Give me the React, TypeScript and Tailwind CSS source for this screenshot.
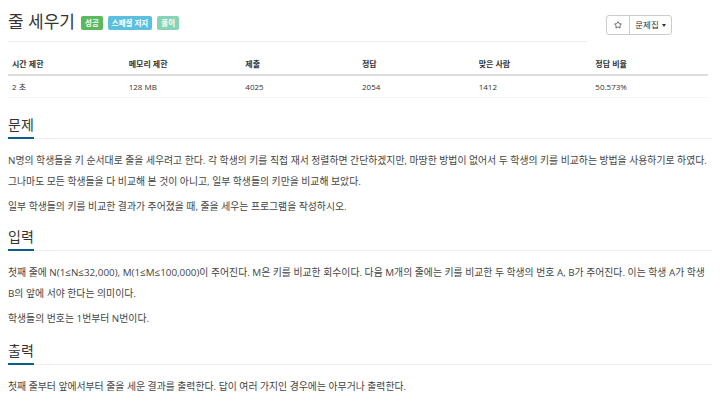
import { Star } from "lucide-react";

const limits = [
  { label: "시간 제한", value: "2 초" },
  { label: "메모리 제한", value: "128 MB" },
  { label: "제출", value: "4025" },
  { label: "정답", value: "2054" },
  { label: "맞은 사람", value: "1412" },
  { label: "정답 비율", value: "50.573%" },
];

function SectionTitle({ children }: { children: string }) {
  return (
    <div className="border-b border-[#eee]">
      <span className="-mb-px inline-block border-b-2 border-[#0d5d8c] text-[14px] leading-[22px] pb-px text-[#333]">
        {children}
      </span>
    </div>
  );
}

export default function App() {
  return (
    <div
      className="w-[720px] h-[402px] overflow-hidden bg-white px-2 text-[#333]"
      style={{ fontFamily: '"Open Sans", "Noto Sans CJK KR", sans-serif' }}
    >
      {/* Title */}
      <div className="flex items-start">
        <div className="flex h-[42px] w-[579px] items-center gap-[5px] border-b border-[#eee] pt-[1px]">
          <h1 className="mr-[1px] text-[17px] leading-none font-normal text-[#333]">줄 세우기</h1>
          <span className="mt-[4px] rounded-[2px] bg-[#5cb85c] px-[4px] text-[7.5px] leading-[14px] font-bold text-white">성공</span>
          <span className="mt-[4px] rounded-[2px] bg-[#5bc0de] px-[4px] text-[7.5px] leading-[14px] font-bold text-white">스페셜 저지</span>
          <span className="mt-[4px] rounded-[2px] bg-[#86d3b5] px-[4px] text-[7.5px] leading-[14px] font-bold text-white">풀이</span>
        </div>
        <div className="ml-[19px] mt-[15px] flex h-[20px] rounded-[3px] border border-[#ccc]">
          <button className="flex w-[23px] items-center justify-center border-r border-[#ccc]">
            <Star size={8} strokeWidth={2.2} className="text-[#333]" />
          </button>
          <button className="flex w-[41px] items-center justify-center gap-[3px] text-[8.5px] text-[#333]">
            문제집
            <span className="mt-[1px] h-0 w-0 border-x-[2.5px] border-t-[3px] border-x-transparent border-t-[#333]" />
          </button>
        </div>
      </div>

      {/* Limits table */}
      <div className="mt-[12px] mr-1 grid grid-cols-6 text-[8px]">
        {limits.map((l) => (
          <div key={l.label} className="flex h-[22px] items-center border-b-2 border-[#ddd] px-[4px] font-bold">
            {l.label}
          </div>
        ))}
        {limits.map((l) => (
          <div key={l.value} className="flex h-[22px] items-center border-b border-[#f4f4f4] px-[4px]">
            {l.value}
          </div>
        ))}
      </div>

      {/* 문제 */}
      <div className="mt-[14px]">
        <SectionTitle>문제</SectionTitle>
        <div className="mt-[11px] break-keep text-[9.85px] leading-[21px] text-[#444]">
          <p className="mb-[4px]">
            N명의 학생들을 키 순서대로 줄을 세우려고 한다. 각 학생의 키를 직접 재서 정렬하면 간단하겠지만, 마땅한 방법이 없어서 두 학생의 키를 비교하는 방법을 사용하기로 하였다. 그나마도 모든 학생들을 다 비교해 본 것이 아니고, 일부 학생들의 키만을 비교해 보았다.
          </p>
          <p>일부 학생들의 키를 비교한 결과가 주어졌을 때, 줄을 세우는 프로그램을 작성하시오.</p>
        </div>
      </div>

      {/* 입력 */}
      <div className="mt-[7px]">
        <SectionTitle>입력</SectionTitle>
        <div className="mt-[11px] break-keep text-[9.85px] leading-[21px] text-[#444]">
          <p className="mb-[4px]">
            첫째 줄에 N(1≤N≤32,000), M(1≤M≤100,000)이 주어진다. M은 키를 비교한 회수이다. 다음 M개의 줄에는 키를 비교한 두 학생의 번호 A, B가 주어진다. 이는 학생 A가 학생 B의 앞에 서야 한다는 의미이다.
          </p>
          <p>학생들의 번호는 1번부터 N번이다.</p>
        </div>
      </div>

      {/* 출력 */}
      <div className="mt-[9px]">
        <SectionTitle>출력</SectionTitle>
        <div className="mt-[11px] break-keep text-[9.85px] leading-[21px] text-[#444]">
          <p>첫째 줄부터 앞에서부터 줄을 세운 결과를 출력한다. 답이 여러 가지인 경우에는 아무거나 출력한다.</p>
        </div>
      </div>
    </div>
  );
}
